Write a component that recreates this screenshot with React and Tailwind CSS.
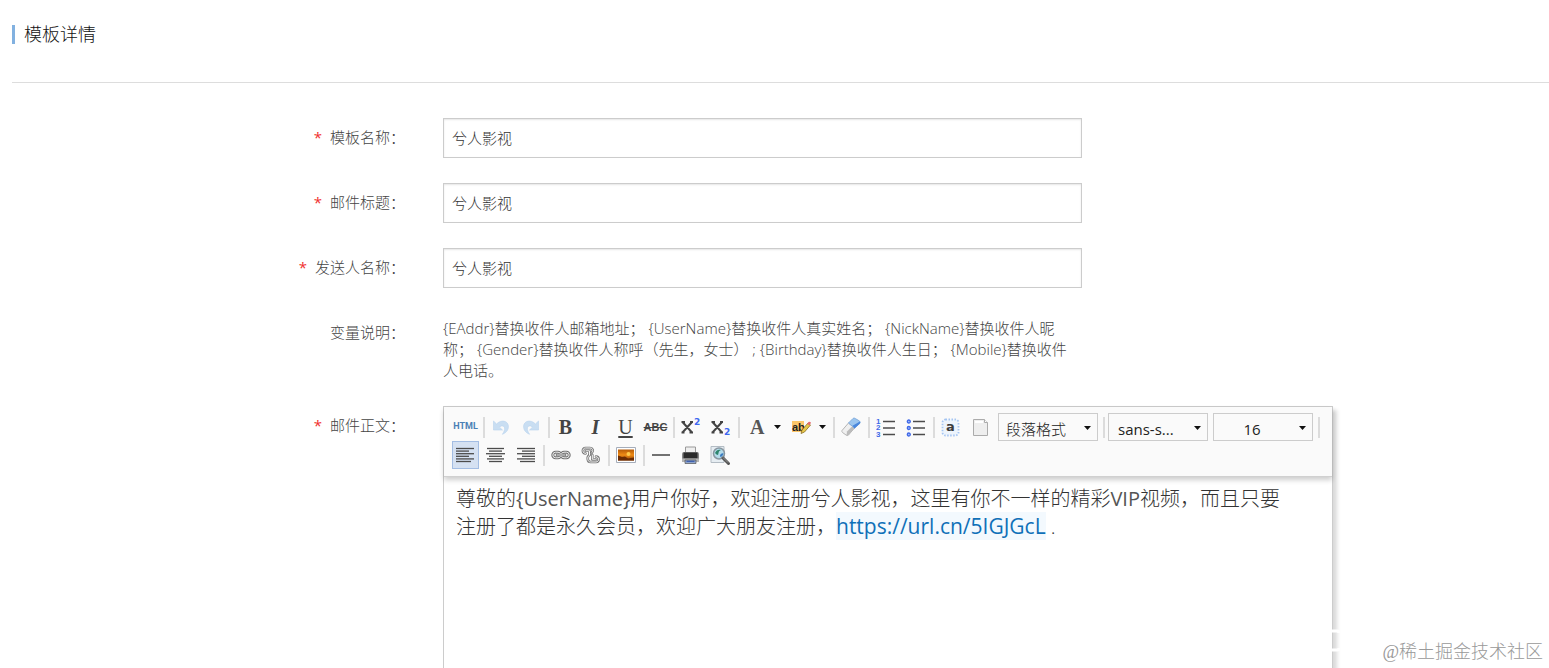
const fields = [
  { id: "templateName", label: "模板名称：", value: "兮人影视" },
  { id: "mailTitle", label: "邮件标题：", value: "兮人影视" },
  { id: "senderName", label: "发送人名称：", value: "兮人影视" },
];

function Row({ label, htmlFor, required, grow, children }) {
  return (
    <div className={`flex gap-[38px] ${grow ? "flex-1" : ""}`}>
      <div className="w-[393px] shrink-0 text-right leading-[38px]">
        {required && <span className="mr-2 font-normal text-[#f03030]">*</span>}
        <label htmlFor={htmlFor}>{label}</label>
      </div>
      {children}
    </div>
  );
}

function ToolButton({ title, active, children }) {
  return (
    <button
      type="button"
      title={title}
      className={`mr-[3px] flex h-7 w-[27px] items-center justify-center border ${
        active ? "border-[#a3bde3] bg-[#d5e1f2]" : "border-transparent"
      }`}
    >
      {children}
    </button>
  );
}

function SplitButton({ title, children }) {
  return (
    <button type="button" title={title} className="mr-[3px] flex h-7 w-[42px] items-center justify-between pl-1 pr-[3px]">
      {children}
      <Caret />
    </button>
  );
}

function Separator() {
  return <div className="mx-px h-[21px] w-[3px] border-l-2 border-[#dcdcdc]" />;
}

function Caret() {
  return (
    <svg width="7" height="4" viewBox="0 0 7 4" className="shrink-0">
      <path d="M0 0h7L3.5 4z" fill="#111" />
    </svg>
  );
}

function ToolSelect({ label, value, align }) {
  return (
    <div className="relative mr-1 ml-px h-7 w-[100px]">
      <select
        aria-label={label}
        className={`h-7 w-full appearance-none border border-[#ccc] bg-[#fafafa] pt-1 pr-[22px] text-[15px] leading-5 text-[#222] ${align}`}
      >
        <option>{value}</option>
      </select>
      <div className="pointer-events-none absolute top-[13px] right-[7px] flex">
        <Caret />
      </div>
    </div>
  );
}

function UndoIcon({ flip }) {
  return (
    <svg width="18" height="18" viewBox="0 0 18 18" className={flip ? "-scale-x-100" : ""}>
      <path d="M1.500 3v9h9L7.600 9.200C9 7.300 12.200 7.400 12.600 10c.3 2-.8 4-2.200 6.300 3.600-1.500 6.400-4.300 6-8.500C15.800 2.700 9 1.200 4.600 6z" fill="#c9def2" stroke="#b9d4ee" strokeWidth=".6" />
    </svg>
  );
}

// x glyph of the superscript and subscript buttons
function CrossMark() {
  return <path d="M1.500 5l9.500 10.500M11 5L1.500 15.500M.5 5h3.500M9 5h3M.5 15.500h3M8.500 15.500H12" stroke="#444" strokeWidth="2" fill="none" />;
}

function ScriptIcon({ y }) {
  return (
    <svg width="20" height="20" viewBox="0 0 20 20">
      <CrossMark />
      <text x="13" y={y} fontFamily="DejaVu Sans" fontSize="9" fontWeight="700" fill="#4068f0">2</text>
    </svg>
  );
}

function AlignIcon({ lines }) {
  return (
    <svg width="19" height="16" viewBox="0 0 19 16" stroke="#4c4c4c" strokeWidth="1.300">
      {lines.map(([x1, x2], i) => (
        <path key={i} d={`M${x1} ${1.5 + i * 2.6}H${x2}`} />
      ))}
    </svg>
  );
}

function LinkIcon() {
  return (
    <svg width="20" height="10" viewBox="0 0 20 10" fill="none">
      <g stroke="#707070" strokeWidth="3">
        <rect x="1.800" y="2.200" width="8" height="5.600" rx="2.800" />
        <rect x="10.200" y="2.200" width="8" height="5.600" rx="2.800" />
      </g>
      <g stroke="#f0f0f0" strokeWidth="1">
        <rect x="1.800" y="2.200" width="8" height="5.600" rx="2.800" />
        <rect x="10.200" y="2.200" width="8" height="5.600" rx="2.800" />
      </g>
      <path d="M6 5h8" stroke="#707070" strokeWidth="2.600" strokeLinecap="round" />
      <path d="M6 5h8" stroke="#f0f0f0" strokeWidth=".9" strokeLinecap="round" />
    </svg>
  );
}

function UnlinkIcon() {
  const top = "M4.500 7.500C1 7.500 1 2 4.500 2H9c3 0 3.500 3 2 4.500M5 4.800h3.500v4";
  const bottom = "M8.500 9C5.500 11 6.500 16 9.500 16H15c3.500 0 3.500-5.500 0-5.500M14.500 13.200h-3.200V9";
  return (
    <svg width="20" height="18" viewBox="0 0 20 18" fill="none" strokeLinecap="round" strokeLinejoin="round">
      <path d={top} stroke="#777" strokeWidth="2.600" />
      <path d={bottom} stroke="#777" strokeWidth="2.600" />
      <path d={top} stroke="#f4f4f4" strokeWidth="1" />
      <path d={bottom} stroke="#f4f4f4" strokeWidth="1" />
    </svg>
  );
}

function ImageIcon() {
  return (
    <svg width="20" height="16" viewBox="0 0 20 16">
      <defs>
        <linearGradient id="sunset" x1="0" y1="0" x2="0" y2="1">
          <stop offset="0" stopColor="#b55a08" />
          <stop offset=".5" stopColor="#f08c16" />
          <stop offset="1" stopColor="#8a3c04" />
        </linearGradient>
      </defs>
      <path d="M.5.5h19v15H.5z" fill="#fff" stroke="#a5adba" />
      <path d="M2 2.500h16v11H2z" fill="url(#sunset)" />
      <path d="M2 8.500l4 1.500 3-.5 3 2 6-1v3H2z" fill="#6b2c04" />
      <circle cx="12.500" cy="7" r="2" fill="#ffc94a" />
    </svg>
  );
}

function PrintIcon() {
  return (
    <svg width="19" height="19" viewBox="0 0 19 19">
      <path d="M4.500 1h10v7h-10z" fill="#eee" stroke="#999" />
      <path d="M1 8q0-2 2-2h13q2 0 2 2v7H1z" fill="#888" />
      <path d="M2.500 6.500h14v6h-14z" fill="#2b2b2b" />
      <path d="M1 12.500h17V16H1z" fill="#b5b5b5" />
      <path d="M4 14h11v3.500H4z" fill="#8fa5cc" stroke="#555" strokeWidth=".7" />
      <path d="M5.500 15.300h8" stroke="#2c50a8" />
    </svg>
  );
}

function PreviewIcon() {
  return (
    <svg width="21" height="21" viewBox="0 0 21 21">
      <path d="M1 1.500h13v16H1z" fill="#e6edf2" stroke="#b3bcc4" />
      <circle cx="9" cy="8.500" r="5.500" fill="#b4dbea" stroke="#8996a0" strokeWidth="1.500" />
      <path d="M5 8c1-3 4-4 6-3-3 1-2 3-3 5-1 0-2-1-3-2z" fill="#2d856c" />
      <path d="M10 11c0-2 2-3 3.500-2.500-.5 2-2 3.500-3 3.500z" fill="#3b7cc0" />
      <path d="M13 13l5.500 5.500" stroke="#555" strokeWidth="3" strokeLinecap="round" />
      <path d="M13 12.500l5 5" stroke="#aaa" strokeWidth=".8" />
    </svg>
  );
}

function EraserIcon() {
  return (
    <svg width="20" height="20" viewBox="0 0 20 20" strokeLinejoin="round">
      <path d="M1 13.500L7.500 6l6 5L7.500 18q-1 1-2.500 0l-3.500-2.500q-1-1-.5-2z" fill="#f0f0f0" stroke="#b5b5b5" />
      <path d="M6 14.500l6-6 1.500 2.500-6 7q-1 1-2 .5z" fill="#bcbcbc" />
      <path d="M7.500 6L12 1.500q1-1 2.200 0L18.500 4q1.200 1 .2 2.500L13.500 11z" fill="#9bc5ef" stroke="#84aedd" />
      <path d="M11.500 8.800L18.900 4.500q.8 1-.2 2.200L13.500 11.500z" fill="#4a87dc" />
    </svg>
  );
}

function OrderedIcon() {
  return (
    <svg width="20" height="20" viewBox="0 0 20 20">
      <g fill="#3f68e8" fontFamily="Liberation Sans" fontSize="8" fontWeight="700">
        <text x="0" y="6.500">1</text>
        <text x="0" y="13">2</text>
        <text x="0" y="19.500">3</text>
      </g>
      <path d="M7 4.500h12M7 11h12M7 17.500h12" stroke="#4c4c4c" strokeWidth="1.300" />
    </svg>
  );
}

function BulletIcon() {
  return (
    <svg width="20" height="20" viewBox="0 0 20 20">
      <g fill="#a7c0f8" stroke="#3f68e8" strokeWidth="1.300">
        <circle cx="2.800" cy="4.500" r="1.500" />
        <circle cx="2.800" cy="11" r="1.500" />
        <circle cx="2.800" cy="17.500" r="1.500" />
      </g>
      <path d="M7 4.500h12M7 11h12M7 17.500h12" stroke="#4c4c4c" strokeWidth="1.300" />
    </svg>
  );
}

function SelectAllIcon() {
  return (
    <svg width="19" height="19" viewBox="0 0 19 19">
      <rect x="1.500" y="1.500" width="16" height="16" rx="3" fill="#edf4fc" stroke="#a5c5f2" strokeWidth="1.800" strokeDasharray="1.500 1.500" />
      <text x="9.500" y="13" textAnchor="middle" fontFamily="DejaVu Sans" fontSize="13" fontWeight="700" fill="#3c3c3c">a</text>
    </svg>
  );
}

function PageIcon() {
  return (
    <svg width="17" height="19" viewBox="0 0 17 19">
      <path d="M1.500 1.500h11l3 3v13h-14z" fill="#eee" stroke="#ababab" />
      <path d="M12.500 1.500v3h3" fill="#fff" stroke="#ababab" />
      <path d="M3 3h8v2H3z" fill="#fff" />
    </svg>
  );
}

function HighlightIcon() {
  return (
    <svg width="21" height="17" viewBox="0 0 21 17">
      <path d="M1 2h12v11H1z" fill="#fcc669" />
      <text x="1" y="11.500" fontFamily="Liberation Sans" fontSize="11" fontWeight="700" fill="#222">ab</text>
      <path d="M10 14.500l1-3.500 6-7 2.500 2-6 7z" fill="#e8c94b" stroke="#8a6d22" strokeWidth=".8" />
      <path d="M16 5l1.500-2q1.500-.8 2.500.8L18.500 6.200z" fill="#e26b70" />
    </svg>
  );
}

function Toolbar() {
  return (
    <div className="relative border-b border-[#d0d0d0] bg-[#fafafa] pt-1.5 pb-[7px] pl-2 shadow-[0_3px_5px_rgba(0,0,0,0.2)]">
      <div className="flex h-7 items-center">
        <ToolButton title="HTML">
          <span className="font-['Roboto'] text-[9px] font-bold text-[#4a80b5]">HTML</span>
        </ToolButton>
        <Separator />
        <ToolButton title="撤销"><UndoIcon /></ToolButton>
        <ToolButton title="重做"><UndoIcon flip /></ToolButton>
        <Separator />
        <div className="flex font-['Liberation_Serif'] text-[20px] font-bold text-[#444]">
          <ToolButton title="加粗">B</ToolButton>
          <ToolButton title="斜体"><i>I</i></ToolButton>
          <ToolButton title="下划线"><u className="font-normal underline-offset-2">U</u></ToolButton>
          <ToolButton title="删除线"><s className="font-['Liberation_Sans'] text-[11px]">ABC</s></ToolButton>
        </div>
        <Separator />
        <ToolButton title="上标"><ScriptIcon y="8" /></ToolButton>
        <ToolButton title="下标"><ScriptIcon y="18" /></ToolButton>
        <Separator />
        <SplitButton title="字体颜色">
          <span className="pl-1 font-['Liberation_Serif'] text-[20px] font-bold text-[#555]">A</span>
        </SplitButton>
        <SplitButton title="背景色"><HighlightIcon /></SplitButton>
        <Separator />
        <ToolButton title="清除格式"><EraserIcon /></ToolButton>
        <Separator />
        <ToolButton title="有序列表"><OrderedIcon /></ToolButton>
        <ToolButton title="无序列表"><BulletIcon /></ToolButton>
        <Separator />
        <ToolButton title="全选"><SelectAllIcon /></ToolButton>
        <ToolButton title="清空文档"><PageIcon /></ToolButton>
        <ToolSelect label="段落格式" value="段落格式" align="pl-[7px]" />
        <Separator />
        <ToolSelect label="字体" value="sans-s..." align="pl-[9px] font-normal" />
        <ToolSelect label="字号" value="16" align="text-center font-normal" />
        <Separator />
      </div>
      <div className="flex h-7 items-center">
        <ToolButton title="居左对齐" active>
          <AlignIcon lines={[[0, 18], [0, 13], [0, 18], [0, 13], [0, 18], [0, 15]]} />
        </ToolButton>
        <ToolButton title="居中对齐">
          <AlignIcon lines={[[1, 18], [3, 16], [0, 19], [3, 16], [1, 18], [3, 16]]} />
        </ToolButton>
        <ToolButton title="居右对齐">
          <AlignIcon lines={[[1, 19], [6, 19], [1, 19], [6, 19], [1, 19], [4, 19]]} />
        </ToolButton>
        <Separator />
        <ToolButton title="超链接"><LinkIcon /></ToolButton>
        <ToolButton title="取消链接"><UnlinkIcon /></ToolButton>
        <Separator />
        <ToolButton title="图片"><ImageIcon /></ToolButton>
        <Separator />
        <ToolButton title="分隔线">
          <svg width="18" height="2"><path d="M0 1h18" stroke="#444" strokeWidth="1.500" /></svg>
        </ToolButton>
        <ToolButton title="打印"><PrintIcon /></ToolButton>
        <ToolButton title="预览"><PreviewIcon /></ToolButton>
      </div>
    </div>
  );
}

export default function App() {
  return (
    <div className="relative flex h-screen flex-col overflow-hidden bg-white pl-3 font-['Open_Sans','Noto_Sans_CJK_SC',sans-serif] text-[15px] font-light text-[#444]">
      <header className="border-b border-[#ddd] pt-[25px] pb-[38px]">
        <h1 className="border-l-3 border-[#82b1e0] pl-[9px] text-[18px] leading-[19px] font-light text-[#111]">
          模板详情
        </h1>
      </header>

      <form className="flex flex-1 flex-col gap-[25px] pt-[35px]">
        {fields.map((field) => (
          <Row key={field.id} label={field.label} htmlFor={field.id} required>
            <input
              id={field.id}
              type="text"
              defaultValue={field.value}
              className="h-10 max-w-[639px] min-w-0 flex-1 border border-[#ccc] px-2 pb-0.5 text-[#333] shadow-[inset_0_1px_2px_rgba(0,0,0,0.1)]"
            />
          </Row>
        ))}

        <Row label="变量说明：">
          <p className="max-w-[639px] pt-[5px] leading-[21px] text-[#444]">
            {"{EAddr}替换收件人邮箱地址； {UserName}替换收件人真实姓名； {NickName}替换收件人昵"}
            <br />
            {"称； {Gender}替换收件人称呼（先生，女士） ; {Birthday}替换收件人生日； {Mobile}替换收件"}
            <br />
            人电话。
          </p>
        </Row>

        <Row label="邮件正文：" required grow>
          <div className="flex max-w-[890px] min-w-0 flex-1 flex-col border border-b-0 border-[#ccc] shadow-[4px_4px_4px_rgba(0,0,0,0.15)]">
            <Toolbar />
            <div className="flex-1 px-3 pt-2 text-[20px] leading-7 text-[#333]">
              尊敬的<span className="font-normal text-[#555]">{"{UserName}"}</span>用户你好，欢迎注册兮人影视，这里有你不一样的精彩<span className="font-normal text-[#555]">VIP</span>视频，而且只要
              <br />
              注册了都是永久会员，欢迎广大朋友注册，
              <a href="https://url.cn/5IGJGcL" className="bg-[#f3f9fe] text-[21px] leading-none font-normal text-[#0f70b8]">
                https://url.cn/5IGJGcL
              </a>
              {" ."}
            </div>
          </div>
        </Row>
      </form>

      <div className="absolute right-1.5 bottom-[3px] font-['Liberation_Serif','Noto_Sans_CJK_SC',serif] text-[18px] leading-[26px] font-light text-[#999]">
        @稀土掘金技术社区
      </div>
      <svg width="8" height="24" viewBox="0 0 8 24" className="absolute right-[209px] bottom-4">
        <path d="M0 3h5q2 0 2 2M0 22h5q2 0 2-2" stroke="#fff" strokeWidth="3" fill="none" />
      </svg>
    </div>
  );
}
